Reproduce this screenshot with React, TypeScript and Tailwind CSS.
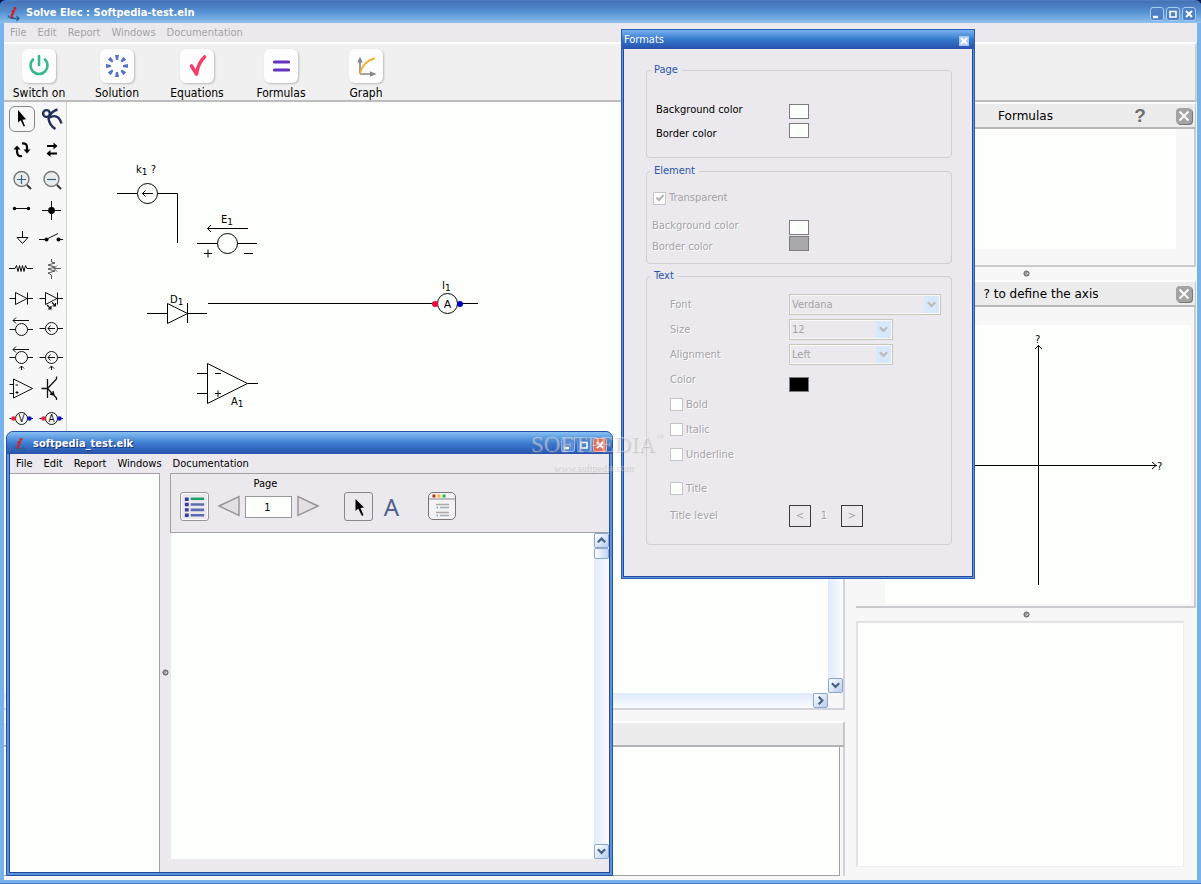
import type { ReactNode } from 'react'

const MENUS = ['File', 'Edit', 'Report', 'Windows', 'Documentation']

/* ---------- small drawings ---------- */

function AppLogo() {
  return (
    <svg className="size-4 shrink-0" viewBox="0 0 16 16" fill="none">
      <path d="M6 6 Q7.5 4 8 5 L5.5 10 Q5 12.5 8 11.5" stroke="#e01818" strokeWidth="2" />
      <circle cx="9" cy="2.5" r="1.4" fill="#e01818" />
      <path d="M2 9.5 Q3 12.5 8 12.5 H12.5 M10.5 10 L13 12.5 L10.5 15" stroke="#2a6496" strokeWidth="1.4" />
    </svg>
  )
}

function Chevron({ dir = 'down', color = '#4d6185' }: { dir?: 'down' | 'up' | 'right'; color?: string }) {
  const d = { down: 'M2 3.5 L6 7.5 L10 3.5', up: 'M2 8 L6 4 L10 8', right: 'M4 2 L8 6 L4 10' }[dir]
  return (
    <svg className="size-[11px]" viewBox="0 0 12 12">
      <path d={d} fill="none" stroke={color} strokeWidth="2.4" />
    </svg>
  )
}

function ScrollButton({ dir, label }: { dir: 'down' | 'up' | 'right'; label: string }) {
  return (
    <button
      aria-label={label}
      className="flex size-[15px] shrink-0 items-center justify-center rounded-[2px] border border-[#8ba6cf] bg-linear-to-br from-white to-[#b9cdec]"
    >
      <Chevron dir={dir} />
    </button>
  )
}

/* ---------- palette ---------- */

const line = { stroke: '#111', strokeWidth: 1, fill: 'none' }

const SourceArrow = ({ y }: { y: number }) => <path {...line} d={`M22 ${y} H6 M9 ${y - 3} L6 ${y} L9 ${y + 3}`} />
const InnerArrow = ({ y }: { y: number }) => <path {...line} d={`M18 ${y} H11 M13.5 ${y - 3} L11 ${y} L13.5 ${y + 3}`} />
const Lens = ({ y }: { y: number }) => (
  <>
    <circle cx="14.5" cy={y} r="6" {...line} />
    <path {...line} d={`M2.5 ${y} H8.5 M20.5 ${y} H26`} />
  </>
)

function Meter({ letter }: { letter: string }) {
  return (
    <>
      <Lens y={14.5} />
      <circle cx="6.5" cy="14.5" r="2.2" fill="#f02040" />
      <circle cx="22.5" cy="14.5" r="2.2" fill="#1010c0" />
      <text x="14.5" y="18" textAnchor="middle" fontSize="10" fill="#111">{letter}</text>
    </>
  )
}

function Magnifier({ plus }: { plus?: boolean }) {
  return (
    <>
      <circle cx="14.5" cy="15" r="7.5" fill="#e8ecec" stroke="#777" strokeWidth="1.4" />
      <path d="M20 21 L24 25" stroke="#333" strokeWidth="2" />
      <path d={plus ? 'M10 15.5 H19 M14.5 11 V20' : 'M10 15.5 H19'} stroke="#33687c" strokeWidth="1.2" />
    </>
  )
}

const DIODE = 'M2.5 14.5 H8.5 M20.5 14.5 H26 M8.5 8.5 V20.5 L20 14.5 Z M20.5 8.5 V20.5'

const PALETTE: { name: string; art: ReactNode }[] = [
  { name: 'Select', art: <path d="M11 6 L11 18.5 L13.7 16.2 L16.6 22.6 L18 22 L15.4 15.7 L19 15.2 Z" fill="#000" /> },
  {
    name: 'Pliers',
    art: (
      <g fill="none" stroke="#23305a" strokeWidth="2.4">
        <circle cx="9.5" cy="9.5" r="3.4" />
        <path d="M20.5 5.5 Q13.5 7.5 11.5 14.5 Q12.5 21.5 18.5 25" />
        <path d="M11.5 14 Q21 8.5 24.500 19.500" />
      </g>
    ),
  },
  {
    name: 'Rotate',
    art: (
      <>
        <path d="M15 22 Q10 23 10 17 V15 M15 9.5 Q20 9 20 13 V16" fill="none" stroke="#000" strokeWidth="2.2" />
        <path d="M6.5 15.5 L10 11.5 L13.5 15.5 Z M16.5 15.5 L20 19.5 L23.5 15.5 Z" fill="#000" />
      </>
    ),
  },
  {
    name: 'Flip',
    art: (
      <>
        <path d="M10 12 H18 M12 19.5 H20" stroke="#000" strokeWidth="1.8" />
        <path d="M16.5 8.5 L20.5 12 L16.5 15.5 Z M13.5 16 L9.5 19.5 L13.5 23 Z" fill="#000" />
      </>
    ),
  },
  { name: 'Zoom in', art: <Magnifier plus /> },
  { name: 'Zoom out', art: <Magnifier /> },
  {
    name: 'Wire',
    art: (
      <>
        <path {...line} d="M7 14.5 H22" />
        <circle cx="7.5" cy="14.5" r="1.7" />
        <circle cx="21.5" cy="14.5" r="1.7" />
      </>
    ),
  },
  {
    name: 'Node',
    art: (
      <>
        <path {...line} d="M5 16.5 H24 M14.5 7 V26" />
        <circle cx="14.5" cy="16.5" r="3.4" />
      </>
    ),
  },
  { name: 'Ground', art: <path {...line} d="M15.5 7 V13 M10 13.5 H21 L15.5 19.5 Z" /> },
  {
    name: 'Switch',
    art: (
      <>
        <path {...line} d="M2 15.5 H9 L21 9.5 M21 15.5 H26" />
        <circle cx="9.5" cy="15.5" r="2" />
        <circle cx="21.5" cy="15.5" r="2" />
      </>
    ),
  },
  { name: 'Resistor', art: <path {...line} d="M2 14.5 H8 L9.5 11.5 L11 17.5 L12.5 11.5 L14 17.5 L15.5 11.5 L17 17.5 L18.5 11.5 L20 14.5 H26" /> },
  {
    name: 'Potentiometer',
    art: <path {...line} stroke="#555" d="M14.5 5 V8 L18 9 L11 11 L18 13 L11 15 L18 17 L11 19 L14.5 21 V25 M24 14.5 H17 M20 11.5 L17 14.5 L20 17.5" />,
  },
  { name: 'Diode', art: <path {...line} d={DIODE} /> },
  {
    name: 'LED',
    art: (
      <>
        <path {...line} d={DIODE} />
        <path {...line} strokeWidth="1.2" d="M10 21 L14 25 M11 25 H14 V22 M15 18.500 L18.500 22 M15.500 22 H18.500 V19" />
      </>
    ),
  },
  { name: 'Voltage source', art: <><Lens y={15.5} /><SourceArrow y={6.5} /></> },
  { name: 'Current source', art: <><Lens y={14.5} /><InnerArrow y={14.5} /></> },
  { name: 'Controlled voltage source', art: <><Lens y={13.5} /><SourceArrow y={5.5} /><path {...line} d="M14.5 26 V22 M12 24.5 L14.5 22 L17 24.5" /></> },
  { name: 'Controlled current source', art: <><Lens y={13.5} /><InnerArrow y={13.5} /><path {...line} d="M14.5 26 V22 M12 24.5 L14.5 22 L17 24.5" /></> },
  { name: 'Amplifier', art: <path {...line} d="M6.5 5 V24 L25.5 14.5 Z M2.5 10.5 H6.5 M2.5 19.5 H6.5 M8.5 11 H11 M8.5 18.5 H11.5 M10 17 V20" /> },
  { name: 'Transistor', art: <path {...line} strokeWidth="1.3" d="M10.5 5 V24 M4.5 14.5 H10.5 L19.5 5 V2.5 M10.5 14.5 L19.5 24 V26 M13 20 L17 21 L16 17" /> },
  { name: 'Voltmeter', art: <Meter letter="V" /> },
  { name: 'Ammeter', art: <Meter letter="A" /> },
]

function Palette() {
  return (
    <div className="w-[63px] shrink-0 border-r border-[#d2d2d2] bg-[#f7f7f7] pt-[2px] pl-[3px]">
      <div className="grid grid-cols-[30px_30px]">
        {PALETTE.map((tool, i) => (
          <button
            key={tool.name}
            aria-label={tool.name}
            className={`m-[2px] flex size-[26px] items-center justify-center rounded-[6px] ${i === 0 ? 'border border-[#888]' : ''}`}
          >
            <svg className="size-[30px] shrink-0" viewBox="0 0 30 30">{tool.art}</svg>
          </button>
        ))}
      </div>
    </div>
  )
}

/* ---------- toolbar ---------- */

const SPOKES = [0, 45, 90, 135, 180, 225, 270, 315]

const TOOLS = [
  {
    label: 'Switch on',
    width: 'w-[70px]',
    art: <path d="M17 7 V16 M11 10.5 A8.5 8.5 0 1 0 23 10.5" fill="none" stroke="#35b98c" strokeWidth="2.6" strokeLinecap="round" />,
  },
  {
    label: 'Solution',
    width: 'w-[86px]',
    art: SPOKES.map(a => <path key={a} d="M15 6 H19 L18 11 H16 Z" fill="#5674bd" transform={`rotate(${a} 17 17)`} />),
  },
  {
    label: 'Equations',
    width: 'w-[74px]',
    art: <path d="M11.5 17 L16.5 25 Q18 14 24.5 8" fill="none" stroke="#f63e6c" strokeWidth="3.6" strokeLinecap="round" strokeLinejoin="round" />,
  },
  {
    label: 'Formulas',
    width: 'w-[94px]',
    art: <path d="M10.5 13 H24.500 M10.500 21 H24.500" stroke="#6331bd" strokeWidth="3.2" strokeLinecap="round" />,
  },
  {
    label: 'Graph',
    width: 'w-[76px]',
    art: (
      <>
        <path d="M11 25 V11 M11 25 H23" stroke="#85878c" strokeWidth="1.6" />
        <path d="M8.300 13.500 L11 7.500 L13.700 13.500 Z M21 22.300 L27.500 25 L21 27.700 Z" fill="#85878c" />
        <path d="M11 24 Q14 13 25 9.5" fill="none" stroke="#f3ae2c" strokeWidth="2" strokeLinecap="round" />
      </>
    ),
  },
]

function Toolbar() {
  return (
    <div className="flex h-[60px] shrink-0 border-t-2 border-r-2 border-b-2 border-t-white border-r-[#cfcfcf] border-b-[#bdbdbf] bg-[#f0f0f0]">
      {TOOLS.map(tool => (
        <button key={tool.label} className={`flex flex-col items-center pt-[5px] ${tool.width}`}>
          <span className="size-[34px] rounded-[6px] bg-[#fdfdfd] shadow-[1px_1px_2px_#bbb]">
            <svg className="size-[34px]" viewBox="0 0 34 34">{tool.art}</svg>
          </span>
          <span className="mt-[3px] text-[12px] leading-[14px]">{tool.label}</span>
        </button>
      ))}
    </div>
  )
}

/* ---------- window pieces ---------- */

function CaptionIcon({ kind }: { kind: string }) {
  return (
    <svg className="size-[12px]" viewBox="0 0 12 12" fill="none" stroke="#fff" strokeWidth="2">
      {kind === 'Minimize' && <path d="M2 9 H7" strokeWidth="2.4" />}
      {kind === 'Maximize' && <path d="M3 3.5 H9 V9 H3 Z" strokeWidth="1.6" />}
      {kind === 'Close' && <path d="M3 3 L9 9 M9 3 L3 9" />}
    </svg>
  )
}

function MenuBar({ disabled }: { disabled?: boolean }) {
  return (
    <nav className={`flex h-[19px] shrink-0 items-center gap-[11px] bg-[#ebe9ed] px-[6px] pt-px text-[11px] ${disabled ? 'text-[#a5a3a8]' : 'text-black'}`}>
      {MENUS.map(m => (
        <button key={m} disabled={disabled}>{m}</button>
      ))}
    </nav>
  )
}

function CloseX() {
  return (
    <button aria-label="Close panel" className="flex size-4 items-center justify-center rounded-[4px] bg-[#a3a3a3] shadow-[1px_1px_0_#777]">
      <svg className="size-3" viewBox="0 0 12 12"><path d="M1.5 1.5 L10.5 10.5 M10.5 1.5 L1.5 10.5" stroke="#fff" strokeWidth="1.8" /></svg>
    </button>
  )
}

function PanelHeader({ children }: { children: ReactNode }) {
  return (
    <div className="grid h-[27px] shrink-0 grid-cols-[64px_1fr_64px] items-center border-t-2 border-r border-b-2 border-t-white border-r-[#c8c8c8] border-b-[#b9b9bb] bg-[#ececec] font-['DejaVu_Sans'] text-[12px]">
      {children}
    </div>
  )
}

function Splitter() {
  return (
    <div className="flex h-[13px] shrink-0 items-center justify-center">
      <Grip />
    </div>
  )
}

function Grip() {
  return (
    <svg className="size-[7px]" viewBox="0 0 7 7">
      <circle cx="3.5" cy="3.5" r="2.6" fill="#999" stroke="#555" strokeWidth="0.8" />
      <path d="M3.5 4.5 L5 3" stroke="#eee" />
    </svg>
  )
}

/* ---------- schematic ---------- */

function Label({ x, y, name, index, rest }: { x: number; y: number; name: string; index: string; rest?: string }) {
  return (
    <text x={x} y={y} fontSize="10">
      {name}
      <tspan dy="2" fontSize="9">{index}</tspan>
      {rest && <tspan dy="-2"> {rest}</tspan>}
    </text>
  )
}

function Schematic() {
  return (
    <svg className="h-[330px] w-[554px] font-['DejaVu_Sans']" viewBox="67 102 554 330">
      <g fill="none" stroke="#000">
        <path d="M117 193.500 H137 M157.500 193.500 H177.500 V243" />
        <circle cx="147.500" cy="193.500" r="10" />
        <path d="M153 193.500 H142.500 M145.500 190.500 L142.500 193.500 L145.500 196.500" />

        <path d="M248 228.500 H207.500 M211 225 L207.500 228.500 L211 232" />
        <path d="M197 243.500 H217.500 M237.500 243.500 H257 M204 253.500 H212 M208 249.500 V257.500 M244 253.500 H253" />
        <circle cx="227.500" cy="243.500" r="10" />

        <path d="M147 313.500 H167.500 M187.500 313.500 H207 M167.500 303.500 V323.500 L187.500 313.500 Z M187.500 303 V323" />

        <path d="M208 303.500 H437 M457.500 303.500 H478" />
        <circle cx="447.500" cy="303.500" r="10" />

        <path d="M207.500 363.500 V403.500 L247.500 383.500 Z M197 373.500 H207 M197 393.500 H207 M247.500 383.500 H258" />
        <path d="M215 373.500 H221 M215 393.500 H221 M218 390.500 V397" />
      </g>
      <circle cx="435" cy="304" r="3" fill="#f8003c" />
      <circle cx="460" cy="304" r="3" fill="#0000c0" />
      <text x="447.500" y="308" textAnchor="middle" fontSize="11">A</text>
      <Label x={136} y={173} name="k" index="1" rest="?" />
      <Label x={221} y={223} name="E" index="1" />
      <Label x={170} y={303} name="D" index="1" />
      <Label x={442} y={289} name="I" index="1" />
      <Label x={231} y={405} name="A" index="1" />
    </svg>
  )
}

function Workspace() {
  return (
    <section className="flex min-w-0 flex-1 flex-col pb-[4px]">
      <div className="flex min-h-0 flex-1 flex-col border-r-2 border-b-2 border-[#d3d3dc]">
        <div className="flex min-h-0 flex-1">
          <Palette />
          <div className="min-w-0 flex-1 overflow-hidden bg-[#fdfffd]">
            <Schematic />
          </div>
          <div className="flex w-[15px] shrink-0 flex-col justify-end bg-linear-to-r from-[#dfeafb] to-[#fafcff]">
            <ScrollButton dir="down" label="Scroll down" />
          </div>
        </div>
        <div className="flex h-[15px] shrink-0 justify-end bg-linear-to-b from-[#dfeafb] to-[#fafcff]">
          <ScrollButton dir="right" label="Scroll right" />
          <div className="w-[15px] bg-[#f7f7f7]" />
        </div>
      </div>
      <div className="mt-[11px] h-[26px] shrink-0 border-t-2 border-r-2 border-b-2 border-t-white border-r-[#c8c8c8] border-b-[#b3b3b5] bg-[#ececec]" />
      <div className="h-[129px] shrink-0 border-r-2 border-[#d3d3d7] pr-[3px]">
        <div className="h-full border-r border-b border-[#a0a0a0] bg-[#fdfffd]" />
      </div>
    </section>
  )
}

function AxisGraph() {
  return (
    <svg className="ml-auto h-[279px] w-[306px] bg-[#fdfffd] font-['DejaVu_Sans']" viewBox="885 325 306 279">
      <path
        d="M918 465.500 H1157 M1152 462 L1156 465.500 L1152 469 M1038.500 585 V345 M1035 349 L1038.500 345.500 L1042 349"
        fill="none"
        stroke="#000"
      />
      <text x="1035" y="343" fontSize="10">?</text>
      <text x="1157" y="470" fontSize="10">?</text>
    </svg>
  )
}

function SidePanels() {
  return (
    <aside className="flex w-[340px] shrink-0 flex-col">
      <PanelHeader>
        <h2 className="col-start-2 text-center">Formulas</h2>
        <div className="flex items-center justify-end gap-[28px] pr-[3px]">
          <button aria-label="Help" className="w-[16px] text-center font-['Liberation_Sans'] text-[19px] leading-[20px] font-bold text-[#6e6e6e]">?</button>
          <CloseX />
        </div>
      </PanelHeader>
      <div className="h-[138px] shrink-0 border-r-2 border-b-2 border-[#cbcbcd] pr-[18px] pb-[16px]">
        <div className="h-full bg-[#fdfffd]" />
      </div>
      <Splitter />
      <PanelHeader>
        <h2 className="col-start-2 pl-[31px] text-center whitespace-nowrap">? to define the axis</h2>
        <div className="flex justify-end pr-[3px]">
          <CloseX />
        </div>
      </PanelHeader>
      <div className="h-[301px] shrink-0 border-r-2 border-b-2 border-[#cbcbcd] pt-[18px] pr-[3px]">
        <AxisGraph />
      </div>
      <Splitter />
      <div className="mr-[12px] mb-[13px] min-h-[120px] flex-1 border-t-2 border-r border-b border-l-2 border-t-[#e2e2e4] border-r-[#eee] border-b-[#eee] border-l-[#e2e2e4] bg-[#fdfffd]" />
    </aside>
  )
}

/* ---------- report window ---------- */

function ReportWindow() {
  return (
    <section className="absolute top-[431px] bottom-[8px] left-[6px] flex w-[607px] flex-col rounded-t-[7px] border border-[#2450a8] bg-[#5b93da]">
      <header className="flex h-[22px] shrink-0 items-center rounded-t-[6px] bg-linear-to-b from-[#86c0f2] via-[#3d7dd0] to-[#2a52ae] pt-[3px] pr-[5px] pl-[5px]">
        <AppLogo />
        <h1 className="ml-[5px] flex-1 text-[11px] font-bold text-white [text-shadow:1px_1px_0_#1a3580]">softpedia_test.elk</h1>
        <div className="flex gap-[2px]">
          <button aria-label="Minimize" className="rounded-[2px] border border-[#8db8ec] bg-[#5a8cd6]"><CaptionIcon kind="Minimize" /></button>
          <button aria-label="Maximize" className="rounded-[2px] border border-[#5b93da] bg-[#4f84d2]"><CaptionIcon kind="Maximize" /></button>
          <button aria-label="Close" className="rounded-[2px] border border-[#f3b0a8] bg-[#e0705f]"><CaptionIcon kind="Close" /></button>
        </div>
      </header>
      <div className="mx-[2px] mb-[2px] flex min-h-0 flex-1 flex-col border-x border-b border-[#2347a0] bg-[#ebe9ed]">
        <MenuBar />
        <div className="flex min-h-0 flex-1">
          <div className="w-[150px] shrink-0 border-t border-r border-[#a3a1a6] bg-[#fdfffd]" />
          <div className="flex w-[10px] shrink-0 items-center justify-center">
            <Grip />
          </div>
          <div className="flex min-w-0 flex-1 flex-col">
            <div className="flex h-[60px] shrink-0 items-start border-t border-b border-l border-[#a3a1a6]">
              <button aria-label="Page list" className="mt-[18px] ml-[9px] rounded-[3px] border border-[#98969b] shadow-[inset_0_0_0_1px_#fff]">
                <svg className="size-[27px]" viewBox="0 0 28 28">
                  <path d="M4 6.500 H8 M4 12 H8 M4 17.500 H8 M4 23 H8" stroke="#3a3aa0" strokeWidth="3.600" />
                  <path d="M10 12 H24 M10 17.500 H24 M10 23 H24" stroke="#5b6cb2" strokeWidth="2.600" />
                  <path d="M10 6 H24" stroke="#1fa068" strokeWidth="2.600" />
                </svg>
              </button>
              <button aria-label="Previous page" className="mt-[21px] ml-[8px]">
                <svg className="h-[22px] w-[24px]" viewBox="0 0 24 22"><path d="M2 11 L22 1.500 V20.500 Z" fill="#e3dfe2" stroke="#96949a" strokeWidth="1.400" /></svg>
              </button>
              <div className="mt-[3px] ml-[4px] flex flex-col items-center">
                <label htmlFor="page" className="mr-[6px] text-[11px] leading-[14px]">Page</label>
                <input
                  id="page"
                  defaultValue="1"
                  className="mt-[5px] h-[22px] w-[47px] border border-[#98969b] bg-[#fdfffd] pr-[2px] text-center text-[11px] outline-none"
                />
              </div>
              <button aria-label="Next page" className="mt-[21px] ml-[4px]">
                <svg className="h-[22px] w-[24px]" viewBox="0 0 24 22"><path d="M22 11 L2 1.500 V20.500 Z" fill="#e3dfe2" stroke="#96949a" strokeWidth="1.400" /></svg>
              </button>
              <button aria-label="Pointer" className="mt-[18px] ml-[24px] rounded-[3px] border border-[#88868b]">
                <svg className="size-[27px]" viewBox="0 0 27 27"><path d="M10.500 6 L10.500 18 L13.200 15.500 L17 23 L18.500 22 L15.400 15 L19 14.500 Z" /></svg>
              </button>
              <button aria-label="Text" className="mt-[17px] ml-[9px] w-[19px] font-['Noto_Sans'] text-[24px] leading-[31px] text-[#53608c]">A</button>
              <button aria-label="Formats" className="mt-[18px] ml-[27px] rounded-[5px] border border-[#77757a] bg-[#f3f2f4]">
                <svg className="size-[26px]" viewBox="0 0 26 26">
                  <path d="M0 6 H26" stroke="#88868b" />
                  <path d="M3.500 3 H6.500" stroke="#c02a18" strokeWidth="3" />
                  <path d="M8.500 3 H11.500" stroke="#f0b818" strokeWidth="3" />
                  <path d="M13.500 3 H16.500" stroke="#18b858" strokeWidth="3" />
                  <path d="M7 11.500 H20 M11 14.500 H20 M7 19.500 H20 M11 22.500 H20" stroke="#a8a8ae" strokeWidth="1.400" />
                  <path d="M7.500 14.500 H9 M7.500 22.500 H9" stroke="#5a9ae8" strokeWidth="1.600" />
                </svg>
              </button>
            </div>
            <div className="flex min-h-0 flex-1">
              <div className="ml-px flex-1 bg-[#fdfffd]" />
              <div className="flex w-[15px] shrink-0 flex-col bg-linear-to-r from-[#dfeafb] to-[#fafcff]">
                <ScrollButton dir="up" label="Scroll page up" />
                <div className="h-[11px] rounded-[2px] border border-[#8ba6cf] bg-linear-to-r from-white to-[#c2d5f2]" />
                <div className="flex-1" />
                <ScrollButton dir="down" label="Scroll page down" />
              </div>
            </div>
            <div className="h-[13px] shrink-0" />
          </div>
        </div>
      </div>
    </section>
  )
}

/* ---------- formats dialog ---------- */

function Group({ title, className, children }: { title: string; className: string; children: ReactNode }) {
  return (
    <fieldset className={`rounded-[4px] border border-[#d0cfd0] ${className}`}>
      <legend className="ml-[3px] px-[4px] text-[11px] leading-[14px] text-[#2a55ab]">{title}</legend>
      {children}
    </fieldset>
  )
}

function Swatch({ id, color, disabled }: { id: string; color: string; disabled?: boolean }) {
  return <button id={id} disabled={disabled} className={`h-[15px] w-[20px] border border-[#7d7b80] ${color}`} />
}

function Check({ label, checked }: { label: string; checked?: boolean }) {
  return (
    <label className="relative flex items-center gap-[3px]">
      <input type="checkbox" disabled defaultChecked={checked} className="size-[13px] appearance-none border border-[#c6c4c8] bg-[#fdfffd]" />
      {checked && (
        <svg className="absolute left-[3px] size-[8px]" viewBox="0 0 8 8"><path d="M0.500 3.500 L3 6 L7.500 1" fill="none" stroke="#b4b2b6" strokeWidth="2" /></svg>
      )}
      {label}
    </label>
  )
}

function Combo({ id, value, width }: { id: string; value: string; width: string }) {
  return (
    <div className={`relative ${width}`}>
      <select id={id} disabled className="h-[21px] w-full appearance-none border border-[#c9c7ba] bg-[#ebe9ed] pl-[2px] text-[11px] opacity-100 shadow-[inset_0_0_0_1px_#f8f8f8] [text-shadow:none]">
        <option>{value}</option>
      </select>
      <span className="pointer-events-none absolute top-[2px] right-[2px] flex h-[17px] w-[15px] items-center justify-center bg-[#d8e8fb]">
        <Chevron color="#bdbbb8" />
      </span>
    </div>
  )
}

const row = 'grid h-[25px] grid-cols-[119px_1fr] items-center'

function FormatsDialog() {
  return (
    <section role="dialog" aria-label="Formats" className="absolute top-[29px] left-[621px] flex h-[550px] w-[354px] flex-col border border-[#2a5cb8] bg-[#5b93da]">
      <header className="flex h-[19px] shrink-0 items-center justify-between bg-linear-to-b from-[#78b2ee] via-[#3478cc] to-[#2a50ac] pt-[2px] pr-[5px] pl-[2px]">
        <h1 className="text-[11px] text-white">Formats</h1>
        <button aria-label="Close" className="flex size-[10px] items-center justify-center bg-[#a9c8f2]">
          <svg className="size-[8px]" viewBox="0 0 8 8"><path d="M1 1 L7 7 M7 1 L1 7" stroke="#fff" strokeWidth="2" /></svg>
        </button>
      </header>
      <div className="mx-[1px] mb-[1px] flex-1 border-x border-b border-[#2347a0] bg-[#ebe9ed] pt-[14px] pr-[20px] pl-[22px] text-[11px] leading-[14px] text-[#a5a3a8]">
        <Group title="Page" className="h-[95px]">
          <div className="grid grid-cols-[133px_1fr] pl-[9px] text-black">
            <div className="flex flex-col pt-[21px]">
              <label htmlFor="page-bg" className="h-[24px] leading-[24px]">Background color</label>
              <label htmlFor="page-border" className="h-[24px] leading-[24px]">Border color</label>
            </div>
            <div className="flex flex-col gap-[4px] pt-[27px]">
              <Swatch id="page-bg" color="bg-[#fdfffd]" />
              <Swatch id="page-border" color="bg-[#fdfffd]" />
            </div>
          </div>
        </Group>
        <Group title="Element" className="mt-[6px] h-[100px]">
          <div className="mt-[10px] flex h-[20px] items-center pl-[6px]">
            <Check label="Transparent" checked />
          </div>
          <div className="grid grid-cols-[137px_1fr] pl-[5px] [text-shadow:1px_1px_0_#fff]">
            <div className="flex flex-col pt-[7px]">
              <label htmlFor="el-bg" className="h-[21px] leading-[21px]">Background color</label>
              <label htmlFor="el-border" className="h-[21px] leading-[21px]">Border color</label>
            </div>
            <div className="flex flex-col gap-px pt-[12px]">
              <Swatch id="el-bg" color="bg-[#fdfffd]" disabled />
              <Swatch id="el-border" color="bg-[#a9a9ab]" disabled />
            </div>
          </div>
        </Group>
        <Group title="Text" className="mt-[5px] h-[276px]">
          <div className="pt-[9px] pl-[23px] [text-shadow:1px_1px_0_#fff]">
            <div className={row}>
              <label htmlFor="font">Font</label>
              <Combo id="font" value="Verdana" width="w-[152px]" />
            </div>
            <div className={row}>
              <label htmlFor="size">Size</label>
              <Combo id="size" value="12" width="w-[104px]" />
            </div>
            <div className={row}>
              <label htmlFor="align">Alignment</label>
              <Combo id="align" value="Left" width="w-[104px]" />
            </div>
            <div className={row}>
              <label htmlFor="color">Color</label>
              <div className="flex self-end"><Swatch id="color" color="bg-black" disabled /></div>
            </div>
            <div className={row}><Check label="Bold" /></div>
            <div className={row}><Check label="Italic" /></div>
            <div className={row}><Check label="Underline" /></div>
            <div className={`mt-[9px] ${row}`}><Check label="Title" /></div>
            <div className={`mt-[2px] ${row}`}>
              <span>Title level</span>
              <div className="flex items-center">
                <button disabled aria-label="Lower level" className="flex size-[22px] items-center justify-center border border-[#3c3c3e]">&lt;</button>
                <span className="w-[30px] pr-[4px] text-center">1</span>
                <button disabled aria-label="Higher level" className="flex size-[22px] items-center justify-center border border-[#3c3c3e]">&gt;</button>
              </div>
            </div>
          </div>
        </Group>
      </div>
    </section>
  )
}

export default function App() {
  return (
    <div className="relative flex h-screen min-h-[760px] w-full flex-col bg-[#0a1a55] font-['DejaVu_Sans_Condensed','DejaVu_Sans',sans-serif] text-black">
      <div className="flex min-h-0 flex-1 flex-col rounded-t-[6px] border-t border-b border-[#4a7cc8] bg-[#76b2ec]">
        <header className="flex h-[22px] shrink-0 items-center rounded-t-[5px] bg-linear-to-b from-[#4670b4] via-[#5590d2] to-[#90c0ec] pt-[3px] pr-[5px] pl-[6px]">
          <AppLogo />
          <h1 className="ml-[4px] flex-1 text-[11px] font-bold text-white">Solve Elec : Softpedia-test.eln</h1>
          <div className="flex gap-[2px]">
            {['Minimize', 'Maximize', 'Close'].map(kind => (
              <button key={kind} aria-label={kind} className="rounded-[3px] border border-[#a4ccf4] bg-[#4f7fc4]">
                <CaptionIcon kind={kind} />
              </button>
            ))}
          </div>
        </header>
        <div className="mx-[4px] mb-[3px] flex min-h-0 flex-1 flex-col bg-[#f7f7f7]">
          <MenuBar disabled />
          <Toolbar />
          <main className="flex min-h-0 flex-1 gap-[11px] pr-px">
            <Workspace />
            <SidePanels />
          </main>
        </div>
      </div>
      <ReportWindow />
      <FormatsDialog />
      <div className="pointer-events-none absolute top-[431px] left-[531px] flex flex-col items-center font-['Liberation_Serif',serif] text-white/40 [text-shadow:1px_1px_1px_#8886]">
        <p className="relative text-[23px] leading-[28px]">
          SOFTPEDIA
          <span className="absolute top-0 left-full text-[8px] leading-[12px]">™</span>
        </p>
        <p className="text-[10px] leading-[18px]">www.softpedia.com</p>
      </div>
    </div>
  )
}
